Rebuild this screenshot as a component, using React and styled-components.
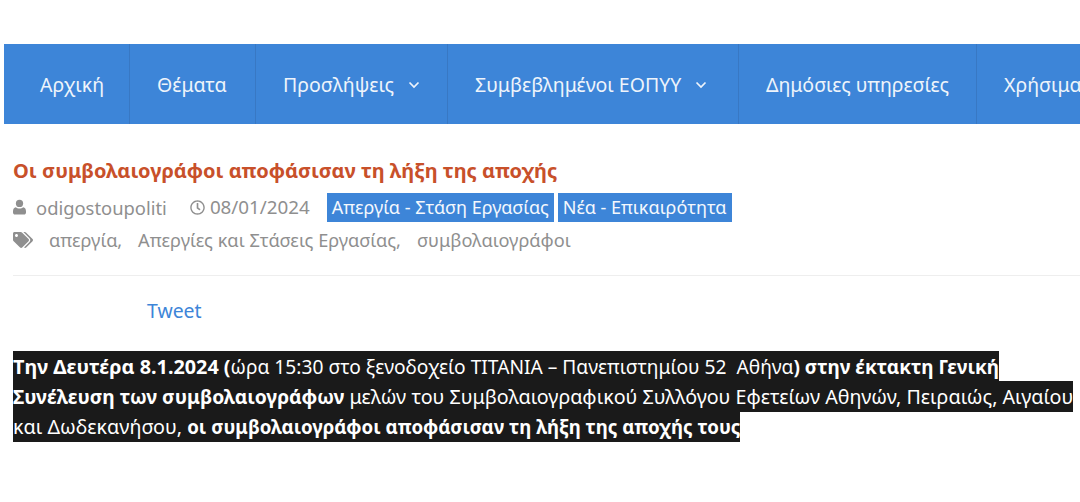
import React from 'react'
import styled, { createGlobalStyle } from 'styled-components'
import { FaTags, FaRegClock } from 'react-icons/fa'

const GlobalStyle = createGlobalStyle`
  html, body {
    margin: 0;
    padding: 0;
    background: #fff;
    overflow: hidden;
    font-family: "Noto Sans", "Open Sans", sans-serif;
  }
`
const Page = styled.div`
  width: 1080px;
  height: 502px;
  overflow: hidden;
  padding: 44px 0 0 4px;
  box-sizing: border-box;
`
const Nav = styled.nav`
  display: flex;
  height: 80px;
  width: 1200px;
  padding-left: 9px;
  box-sizing: border-box;
  background: #3d85d8;
`
const NavItem = styled.a`
  display: flex;
  align-items: center;
  gap: 14px;
  flex: none;
  width: ${p => p.$width}px;
  box-sizing: border-box;
  padding-left: 27px;
  border-right: 1px solid #3878c4;
  color: #eef4fb;
  font-size: 19.5px;
  white-space: nowrap;
`
const Chevron = styled.svg`
  width: 12px;
  height: 8px;
  margin-top: 2px;
  fill: none;
  stroke: #eef4fb;
  stroke-width: 1.7;
`
const Content = styled.main`
  padding: 34px 0 0 9px;
`
const Title = styled.h1`
  margin: 0;
  font-size: 20px;
  line-height: 26px;
  font-weight: 700;
  color: #c8502a;
`
const Meta = styled.div`
  display: flex;
  align-items: center;
  height: 30px;
  margin-top: 8px;
  color: #8f8f8f;
`
const MetaText = styled.span`
  display: inline-flex;
  align-items: center;
  gap: ${p => p.$gap}px;
  margin-right: ${p => p.$right}px;
  font-size: ${p => p.$size || 18.4}px;
`
const UserIcon = styled.svg`
  width: 13px;
  height: 16px;
  fill: #8f8f8f;
`
const Category = styled.a`
  background: #3d85d8;
  color: #f4f8fd;
  height: 29px;
  line-height: 29px;
  padding: 0 5px;
  margin-right: 4px;
  font-size: 18px;
`
const TagRow = styled.div`
  display: flex;
  align-items: center;
  height: 30px;
  margin-top: 3px;
  padding-bottom: 20px;
  border-bottom: 1px solid #eee;
  color: #8f8f8f;
  font-size: 18.2px;
`
const TagIcon = styled(FaTags)`
  font-size: 20px;
  margin-right: 16px;
`
const Tag = styled.a`
  margin-right: 16px;
`
const Tweet = styled.a`
  display: block;
  margin: 22px 0 0 134px;
  color: #3d85d8;
  font-size: 19.4px;
  line-height: 26px;
`
const Paragraph = styled.p`
  margin: 28px 0 0;
  font-size: 19.7px;
  line-height: 30px;
`
const Highlight = styled.span`
  background: #1a1a1a;
  color: #fff;
  padding: 2px 0;
`
const Run = styled.span`
  font-size: ${p => p.$size}px;
  font-weight: ${p => (p.$bold ? 700 : 400)};
`

const items = [
  { label: 'Αρχική', width: 117 },
  { label: 'Θέματα', width: 126 },
  { label: 'Προσλήψεις', width: 192, more: true },
  { label: 'Συμβεβλημένοι ΕΟΠΥΥ', width: 291, more: true },
  { label: 'Δημόσιες υπηρεσίες', width: 238 },
  { label: 'Χρήσιμα', width: 160 }
]

export default function App() {
  return (
    <Page>
      <GlobalStyle />
      <Nav>
        {items.map(item => (
          <NavItem key={item.label} $width={item.width}>
            {item.label}
            {item.more && (
              <Chevron viewBox="0 0 12 8"><polyline points="1.5,1.5 6,6 10.5,1.5" /></Chevron>
            )}
          </NavItem>
        ))}
      </Nav>
      <Content>
        <Title>Οι συμβολαιογράφοι αποφάσισαν τη λήξη της αποχής</Title>
        <Meta>
          <MetaText $gap={10} $right={23}>
            <UserIcon viewBox="0 0 14 16">
              <circle cx="7" cy="4.2" r="3.9" />
              <path d="M3 8.2c1 .9 2.4 1.4 4 1.4s3-.5 4-1.4c1.9.3 3 2 3 4.6v1c0 1.3-.9 2.2-2.2 2.2H2.2C.9 16 0 15.1 0 13.800v-1c0-2.600 1.100-4.300 3-4.600z" />
            </UserIcon>
            odigostoupoliti
          </MetaText>
          <MetaText $gap={5} $right={17} $size={18.8}><FaRegClock size={15} />08/01/2024</MetaText>
          <Category>Απεργία - Στάση Εργασίας</Category>
          <Category>Νέα - Επικαιρότητα</Category>
        </Meta>
        <TagRow>
          <TagIcon />
          <Tag>απεργία,</Tag>
          <Tag>Απεργίες και Στάσεις Εργασίας,</Tag>
          <Tag>συμβολαιογράφοι</Tag>
        </TagRow>
        <Tweet>Tweet</Tweet>
        <Paragraph>
          <Highlight>
            <Run $bold $size={19.8}>Την Δευτέρα 8.1.2024 (</Run>
            <Run $size={19.2}>ώρα 15:30 στο ξενοδοχείο TITANIA – Πανεπιστημίου 52&nbsp; Αθήνα</Run>
            <Run $bold $size={19}>) στην έκτακτη Γενική</Run>
            <br />
            <Run $bold $size={19.3}>Συνέλευση των συμβολαιογράφων</Run> μελών του Συμβολαιογραφικού Συλλόγου Εφετείων Αθηνών, Πειραιώς, Αιγαίου
            <br />
            και Δωδεκανήσου, <Run $bold $size={18.7}>οι συμβολαιογράφοι αποφάσισαν τη λήξη της αποχής τους</Run>
          </Highlight>
        </Paragraph>
      </Content>
    </Page>
  )
}
